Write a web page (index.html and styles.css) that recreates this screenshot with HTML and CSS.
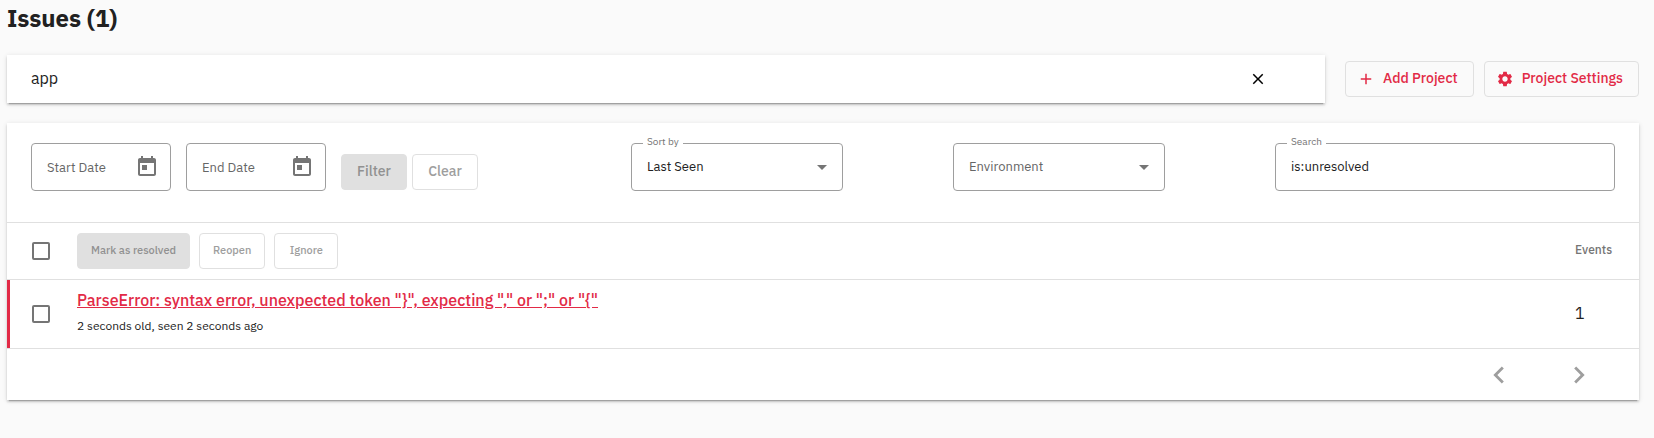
FILE: index.html
```html
<!DOCTYPE html>
<html lang="en">
<head>
<meta charset="utf-8">
<title>Issues</title>
<link rel="stylesheet" href="styles.css">
</head>
<body>
<main class="page">
  <h1 class="title">Issues (1)</h1>

  <div class="project-bar">
    <div class="card project-search">
      <input class="project-input" type="text" value="app" aria-label="Project">
      <button class="icon-button" type="button" aria-label="Clear project">
        <svg width="18" height="18" viewBox="0 0 24 24"><path fill="#000" d="M19 6.41 17.59 5 12 10.59 6.41 5 5 6.41 10.59 12 5 17.59 6.41 19 12 13.41 17.59 19 19 17.59 13.41 12z"/></svg>
      </button>
    </div>
    <button class="button button-primary" type="button">
      <svg width="18" height="18" viewBox="0 0 24 24"><path fill="currentColor" d="M19 13h-6v6h-2v-6H5v-2h6V5h2v6h6v2z"/></svg>
      <span class="button-text">Add Project</span>
    </button>
    <button class="button button-primary" type="button">
      <svg width="18" height="18" viewBox="0 0 24 24"><path fill="currentColor" d="M19.14 12.94c.04-.3.06-.61.06-.94 0-.32-.02-.64-.07-.94l2.03-1.58c.18-.14.23-.41.12-.61l-1.92-3.32c-.12-.22-.37-.29-.59-.22l-2.39.96c-.5-.38-1.03-.7-1.62-.94l-.36-2.54c-.04-.24-.24-.41-.48-.41h-3.84c-.24 0-.43.17-.47.41l-.36 2.54c-.59.24-1.13.57-1.62.94l-2.39-.96c-.22-.08-.47 0-.59.22L2.74 8.87c-.12.21-.08.47.12.61l2.03 1.58c-.05.3-.09.63-.09.94s.02.64.07.94l-2.03 1.58c-.18.14-.23.41-.12.61l1.92 3.32c.12.22.37.29.59.22l2.39-.96c.5.38 1.03.7 1.62.94l.36 2.54c.05.24.24.41.48.41h3.84c.24 0 .44-.17.47-.41l.36-2.54c.59-.24 1.13-.56 1.62-.94l2.39.96c.22.08.47 0 .59-.22l1.92-3.32c.12-.22.07-.47-.12-.61l-2.01-1.58zM12 15.6c-1.98 0-3.6-1.62-3.6-3.6s1.62-3.6 3.6-3.6 3.6 1.62 3.6 3.6-1.62 3.6-3.6 3.6z"/></svg>
      <span class="button-text">Project Settings</span>
    </button>
  </div>

  <section class="card issues">
    <form class="filters">
      <div class="date-group">
        <div class="field field-date">
          <input class="control" type="text" placeholder="Start Date" aria-label="Start Date">
          <button class="icon-button" type="button" aria-label="Open start date calendar">
            <svg width="24" height="24" viewBox="0 0 24 24"><path fill="#757575" d="M19 3h-1V1h-2v2H8V1H6v2H5c-1.1 0-2 .9-2 2v14c0 1.1.9 2 2 2h14c1.1 0 2-.9 2-2V5c0-1.1-.9-2-2-2zm0 16H5V8h14v11zM7 10h5v5H7z"/></svg>
          </button>
        </div>
        <div class="field field-date">
          <input class="control" type="text" placeholder="End Date" aria-label="End Date">
          <button class="icon-button" type="button" aria-label="Open end date calendar">
            <svg width="24" height="24" viewBox="0 0 24 24"><path fill="#757575" d="M19 3h-1V1h-2v2H8V1H6v2H5c-1.1 0-2 .9-2 2v14c0 1.1.9 2 2 2h14c1.1 0 2-.9 2-2V5c0-1.1-.9-2-2-2zm0 16H5V8h14v11zM7 10h5v5H7z"/></svg>
          </button>
        </div>
        <div class="date-actions">
          <button class="button button-filled" type="submit" disabled><span class="button-text">Filter</span></button>
          <button class="button" type="button" disabled><span class="button-text">Clear</span></button>
        </div>
      </div>
      <div class="field field-select">
        <label class="field-label" for="sort">Sort by</label>
        <select class="control" id="sort"><option>Last Seen</option></select>
        <svg class="arrow" width="10" height="5" viewBox="0 0 10 5"><path fill="#757575" d="M0 0h10L5 5z"/></svg>
      </div>
      <div class="field field-select">
        <select class="control control-empty" aria-label="Environment"><option>Environment</option></select>
        <svg class="arrow" width="10" height="5" viewBox="0 0 10 5"><path fill="#757575" d="M0 0h10L5 5z"/></svg>
      </div>
      <div class="field field-search">
        <label class="field-label" for="search">Search</label>
        <input class="control" id="search" type="text" value="is:unresolved">
      </div>
    </form>

    <table class="table">
      <thead>
        <tr class="head-row">
          <th class="check-cell"><input class="check" type="checkbox" aria-label="Select all issues"></th>
          <th class="main-cell">
            <div class="bulk-actions">
              <button class="button button-small button-filled" type="button" disabled><span class="button-text">Mark as resolved</span></button>
              <button class="button button-small" type="button" disabled><span class="button-text">Reopen</span></button>
              <button class="button button-small" type="button" disabled><span class="button-text">Ignore</span></button>
            </div>
          </th>
          <th class="events-cell">Events</th>
        </tr>
      </thead>
      <tbody>
        <tr class="issue-row">
          <td class="check-cell"><input class="check" type="checkbox" aria-label="Select issue"></td>
          <td class="main-cell">
            <a class="issue-link" href="#">ParseError: syntax error, unexpected token "}", expecting "," or ";" or "{"</a>
            <p class="issue-age">2 seconds old, seen 2 seconds ago</p>
          </td>
          <td class="events-cell">1</td>
        </tr>
      </tbody>
    </table>

    <nav class="pager" aria-label="Pages">
      <button class="icon-button" type="button" aria-label="Previous page" disabled>
        <svg width="34" height="34" viewBox="0 0 24 24"><path fill="#9e9e9e" d="M15.41 7.41 14 6l-6 6 6 6 1.41-1.41L10.83 12z"/></svg>
      </button>
      <button class="icon-button" type="button" aria-label="Next page" disabled>
        <svg width="34" height="34" viewBox="0 0 24 24"><path fill="#9e9e9e" d="M10 6 8.590 7.410 13.170 12l-4.580 4.590L10 18l6-6z"/></svg>
      </button>
    </nav>
  </section>
</main>
</body>
</html>
```
FILE: styles.css
```css
* {
  box-sizing: border-box;
}

body {
  margin: 0;
  background: #fafafa;
  color: #212121;
  font: 16px/24px "IBM Plex Sans", Roboto, sans-serif;
}

button,
input,
select {
  font: inherit;
  color: inherit;
}

.page {
  padding: 5px 15px 32px 7px;
}

.title {
  margin: 0 0 24px;
  font-size: 24px;
  line-height: 26px;
  font-weight: 700;
}

.card {
  background: #fff;
  box-shadow: 0 3px 1px -2px rgba(0, 0, 0, 0.2), 0 2px 2px 0 rgba(0, 0, 0, 0.14), 0 1px 5px 0 rgba(0, 0, 0, 0.12);
}

.project-bar {
  display: flex;
  align-items: center;
  gap: 10px;
  margin-bottom: 20px;
}

.project-search {
  display: flex;
  flex: 1;
  align-items: center;
  margin-right: 10px;
  padding: 0 58px 0 24px;
}

.project-input {
  flex: 1;
  min-width: 0;
  height: 48px;
  padding: 0 0 2px;
  border: 0;
  outline: 0;
  background: none;
}

.icon-button {
  display: flex;
  padding: 0;
  border: 0;
  background: none;
}

.button {
  display: flex;
  align-items: center;
  justify-content: center;
  min-width: 64px;
  height: 36px;
  padding: 0 15px;
  border: 1px solid #e0e0e0;
  border-radius: 4px;
  background: none;
  color: #9e9e9e;
  font-size: 14px;
  font-weight: 500;
  white-space: nowrap;
}

.button-text {
  padding-bottom: 2px;
}

.button-primary {
  gap: 8px;
  padding: 0 15px 0 11px;
  color: #e22a46;
}

.button-filled {
  background: #e0e0e0;
  color: #919191;
}

.button-small {
  padding: 0 13px;
  font-size: 11px;
}

.filters {
  display: flex;
  justify-content: space-between;
  gap: 16px;
  padding: 20px 24px 31px;
  border-bottom: 1px solid #e0e0e0;
}

.date-group {
  display: flex;
  gap: 15px;
  padding-right: 43px;
}

.date-actions {
  display: flex;
  gap: 5px;
  padding-top: 11px;
}

.date-actions .button {
  min-width: 66px;
}

.field {
  position: relative;
  display: flex;
  align-items: center;
  height: 48px;
  border: 1px solid #9e9e9e;
  border-radius: 4px;
  font-size: 13px;
}

.field-date {
  width: 140px;
  padding-right: 11px;
}

.field-select {
  width: 212px;
}

.field-search {
  width: 340px;
}

.field-search .control {
  padding-bottom: 2px;
}

.field-label {
  position: absolute;
  top: -9px;
  left: 11px;
  padding: 0 4px;
  background: #fff;
  color: #757575;
  font-size: 10px;
  line-height: 14px;
}

.control {
  flex: 1;
  min-width: 0;
  height: 46px;
  padding: 0 0 0 15px;
  border: 0;
  outline: 0;
  background: none;
  appearance: none;
}

.control::placeholder,
.control-empty {
  color: #666;
  opacity: 1;
}

.arrow {
  position: absolute;
  top: 21px;
  right: 15px;
  pointer-events: none;
}

.table {
  width: 100%;
  border-spacing: 0;
  table-layout: fixed;
}

.table th,
.table td {
  padding: 0;
  border-bottom: 1px solid #e0e0e0;
  text-align: left;
  vertical-align: middle;
}

.head-row {
  height: 57px;
}

.issue-row {
  height: 69px;
}

.issue-row .check-cell {
  box-shadow: inset 3px 0 #e22a46;
}

.table .check-cell {
  width: 70px;
  padding-left: 25px;
}

.table .issue-row .main-cell {
  padding-bottom: 4px;
}

.table .events-cell {
  width: 64px;
  padding-bottom: 2px;
}

.head-row .events-cell {
  color: #757575;
  font-size: 12px;
  font-weight: 500;
}

.check {
  display: block;
  width: 18px;
  height: 18px;
  margin: 0;
  border: 2px solid #757575;
  border-radius: 2px;
  background: #fff;
  appearance: none;
}

.bulk-actions {
  display: flex;
  gap: 9px;
}

.issue-link {
  color: #e22a46;
  font-size: 16px;
  font-weight: 500;
}

.issue-age {
  margin: 4px 0 0;
  font-size: 12px;
  line-height: 20px;
}

.pager {
  display: flex;
  justify-content: flex-end;
  gap: 46px;
  padding: 9px 43px 8px;
}
```
